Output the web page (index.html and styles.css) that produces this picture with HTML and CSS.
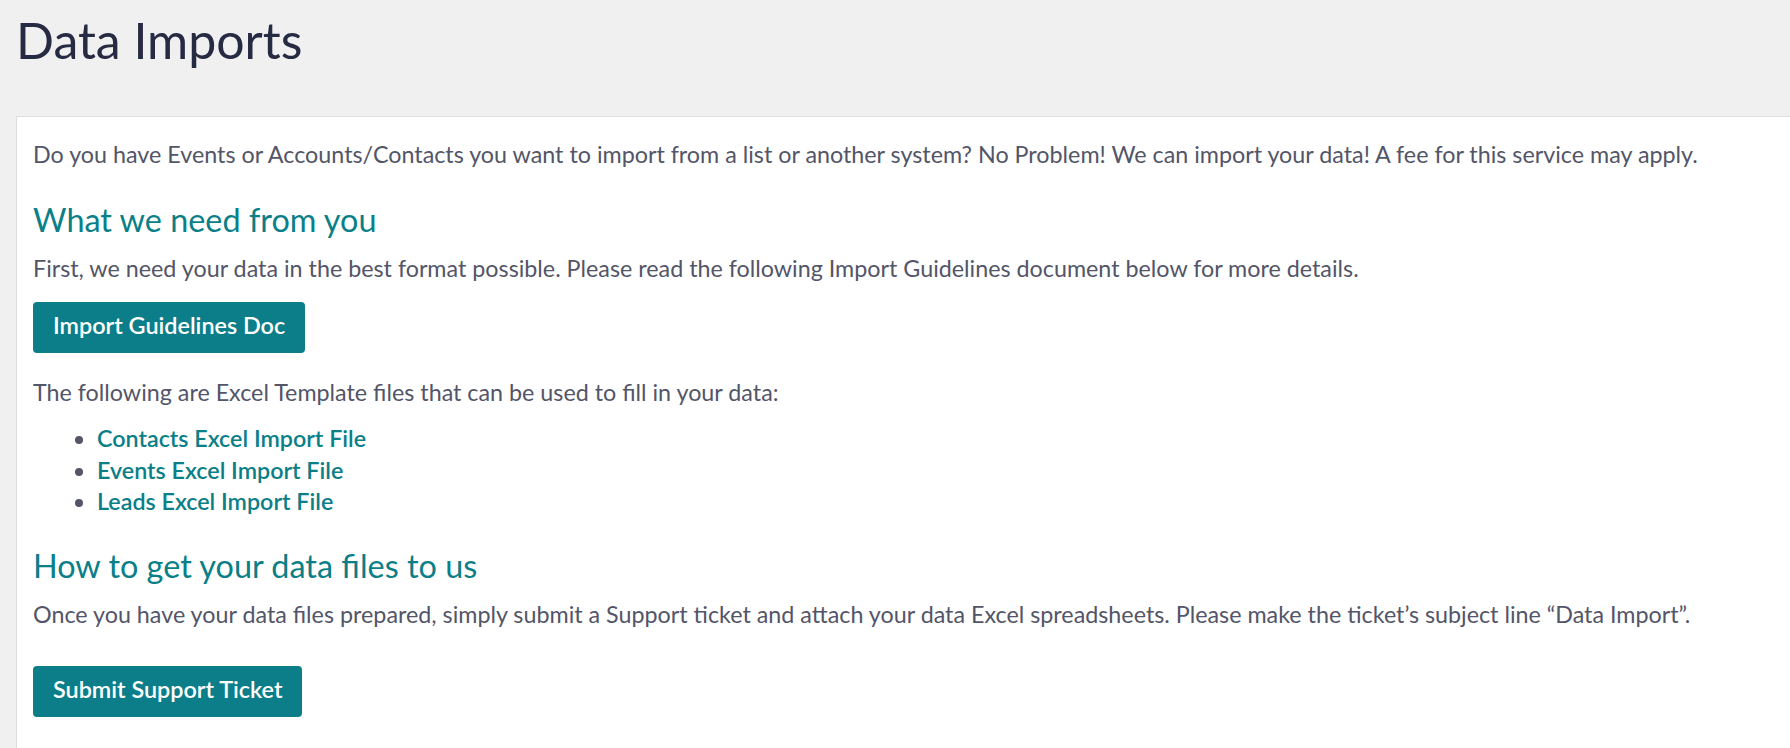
FILE: index.html
```html
<!DOCTYPE html>
<html>
<head>
<meta charset="utf-8">
<link rel="stylesheet" href="styles.css">
</head>
<body>
<header class="page-header">
  <h1 class="page-title">Data Imports</h1>
</header>
<main class="panel">
  <p class="text">Do you have Events or Accounts/Contacts you want to import from a list or another system? No Problem! We can import your data! A fee for this service may apply.</p>
  <h2 class="section-title first">What we need from you</h2>
  <p class="text after-title">First, we need your data in the best format possible. Please read the following Import Guidelines document below for more details.</p>
  <div class="actions actions-guide"><a class="btn" href="#">Import Guidelines Doc</a></div>
  <p class="text after-btn">The following are Excel Template files that can be used to fill in your data:</p>
  <ul class="file-list">
    <li><a href="#">Contacts Excel Import File</a></li>
    <li><a href="#">Events Excel Import File</a></li>
    <li><a href="#">Leads Excel Import File</a></li>
  </ul>
  <h2 class="section-title second">How to get your data files to us</h2>
  <p class="text after-title">Once you have your data files prepared, simply submit a Support ticket and attach your data Excel spreadsheets. Please make the ticket’s subject line “Data Import”.</p>
  <div class="actions actions-ticket"><a class="btn" href="#">Submit Support Ticket</a></div>
</main>
</body>
</html>
```
FILE: styles.css
```css
html, body {
  margin: 0;
  padding: 0;
}
body {
  background: #f0f0f0;
  font-family: Lato, "Liberation Sans", sans-serif;
  color: #535568;
}
.page-header {
  padding: 10px 16px 0;
  height: 116px;
  box-sizing: border-box;
}
.page-title {
  margin: 0;
  font-size: 50px;
  line-height: 60px;
  font-weight: 400;
  color: #262a42;
}
.panel {
  box-sizing: border-box;
  margin-left: 16px;
  min-height: calc(100vh - 116px);
  background: #fff;
  border-top: 1px solid #dcdde1;
  border-left: 1px solid #dcdde1;
  padding: 21px 16px 20px;
}
.text {
  margin: 0;
  font-size: 23.3px;
  line-height: 32px;
}
.section-title {
  margin: 0;
  font-size: 32.4px;
  line-height: 40px;
  font-weight: 400;
  color: #0a7f88;
}
.section-title.first {
  margin-top: 30px;
}
.section-title.second {
  margin-top: 28px;
}
.text.after-title {
  margin-top: 12px;
}
.text.after-btn {
  margin-top: 23px;
}
.actions {
  display: flex;
}
.actions-guide {
  margin-top: 18px;
}
.actions-ticket {
  margin-top: 36px;
}
.btn {
  display: block;
  background: #0b7e89;
  color: #fff;
  text-decoration: none;
  font-size: 23.4px;
  font-weight: 600;
  line-height: 47px;
  padding: 0 20px 4px;
  border-radius: 4px;
}
.file-list {
  margin: 15px 0 0;
  padding-left: 64px;
  font-size: 23.3px;
  line-height: 31.5px;
}
.file-list a {
  color: #0a7f88;
  text-decoration: none;
  font-weight: 600;
}
```
